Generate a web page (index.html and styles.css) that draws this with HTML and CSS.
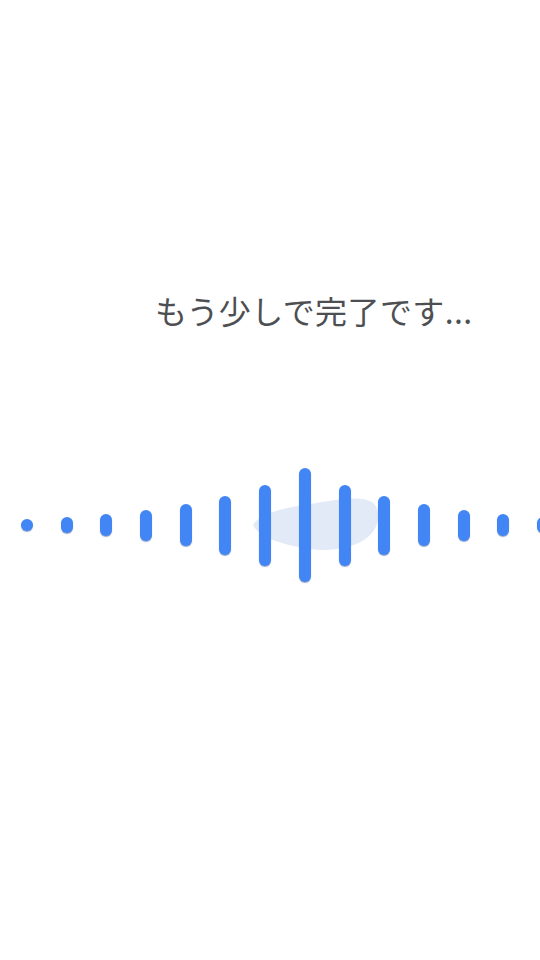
FILE: index.html
```html
<!DOCTYPE html>
<html lang="ja">
<head>
<meta charset="utf-8">
<link rel="stylesheet" href="styles.css">
</head>
<body>
<main class="screen">
  <p class="message">もう少しで完了です...</p>
  <div class="wave">
    <svg class="blob" width="132" height="62" viewBox="0 0 132 62" aria-hidden="true">
      <path d="M3 33 C10 20 40 15 60 12 C85 8 110 3 122 10 C132 17 130 35 118 45 C105 56 80 60 60 57 C40 54 10 48 3 33 Z" fill="#e3eaf7"/>
    </svg>
    <span class="bar" style="height:12px"></span>
    <span class="bar" style="height:16px"></span>
    <span class="bar" style="height:22px"></span>
    <span class="bar" style="height:31px"></span>
    <span class="bar" style="height:42px"></span>
    <span class="bar" style="height:59px"></span>
    <span class="bar" style="height:81px"></span>
    <span class="bar" style="height:114px"></span>
    <span class="bar" style="height:81px"></span>
    <span class="bar" style="height:59px"></span>
    <span class="bar" style="height:42px"></span>
    <span class="bar" style="height:31px"></span>
    <span class="bar" style="height:22px"></span>
    <span class="bar" style="height:16px"></span>
  </div>
</main>
</body>
</html>
```
FILE: styles.css
```css
html, body {
  margin: 0;
  padding: 0;
  background: #ffffff;
}
.screen {
  width: 540px;
  height: 960px;
  overflow: hidden;
  display: flex;
  flex-direction: column;
}
.message {
  margin: 291px 0 0 0;
  padding-left: 155px;
  font-family: "Noto Sans CJK JP", "Noto Sans", sans-serif;
  font-size: 32px;
  line-height: 38px;
  letter-spacing: 0.4px;
  color: #4d4f53;
  white-space: nowrap;
}
.wave {
  position: relative;
  margin-top: 139px;
  height: 114px;
  display: flex;
  align-items: center;
  gap: 27.7px;
  padding-left: 21px;
}
.blob {
  position: absolute;
  left: 250px;
  top: 24px;
}
.bar {
  position: relative;
  flex: 0 0 12px;
  width: 12px;
  border-radius: 6px;
  background: #4285f4;
  box-shadow: 0 1px 1px rgba(25, 60, 140, 0.45);
}
```
